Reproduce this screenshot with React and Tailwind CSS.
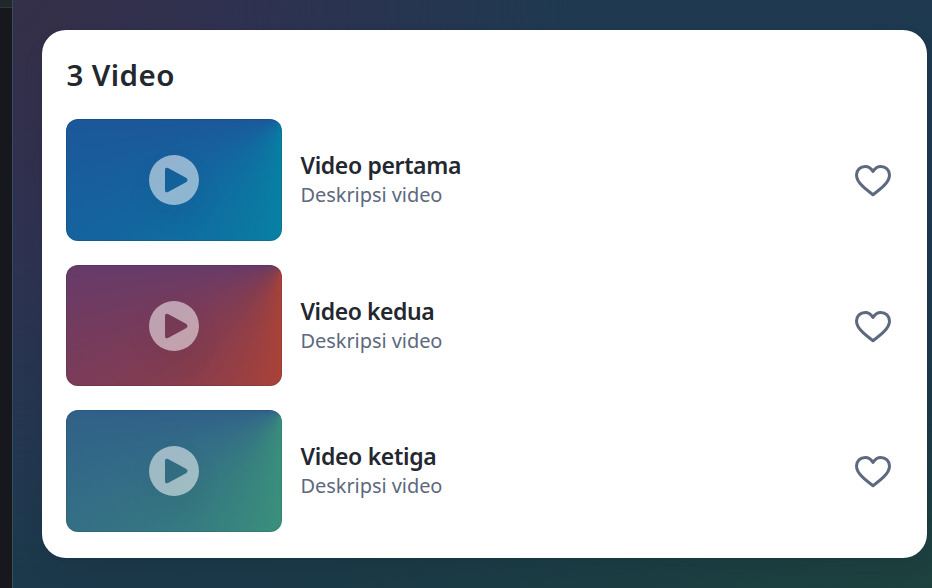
const videos = [
  {
    title: 'Video pertama',
    tracking: 'tracking-[-0.36px]',
    gradient: 'bg-[conic-gradient(at_right_top,#0880a3_0deg,#0880a3_180deg,#106ca1_222deg,#175f9d_250deg,#1c5799_270deg,#0880a3_360deg)]',
  },
  {
    title: 'Video kedua',
    tracking: 'tracking-[-0.43px]',
    gradient: 'bg-[conic-gradient(at_right_top,#a94238_0deg,#a94238_180deg,#863d4e_222deg,#753b5d_250deg,#663b69_270deg,#a94238_360deg)]',
  },
  {
    title: 'Video ketiga',
    tracking: 'tracking-[-0.32px]',
    gradient: 'bg-[conic-gradient(at_right_top,#3a907c_0deg,#3a907c_180deg,#367c80_217deg,#336b87_250deg,#306088_270deg,#3a907c_360deg)]',
  },
];

function Thumbnail({ gradient }) {
  return (
    <div className={`flex h-[121.5px] w-[216px] shrink-0 items-center justify-center rounded-xl shadow-[inset_0_0_0_1px_rgba(0,0,0,0.09)] ${gradient}`}>
      <svg className="size-[50px] drop-shadow-[0_12px_12px_rgba(0,0,0,0.09)]" viewBox="0 0 50 50">
        <path
          fill="#fff"
          fillOpacity="0.53"
          fillRule="evenodd"
          d="M25 0A25 25 0 1 1 25 50A25 25 0 1 1 25 0ZM16 14.8V35.2C16 37.2 17.5 37.7 19 36.9L37 27.2C39 26 39 24 37 22.8L19 13.1C17.5 12.3 16 12.8 16 14.8Z"
        />
      </svg>
    </div>
  );
}

function Heart() {
  return (
    <svg className="h-[32px] w-[37px] overflow-visible" viewBox="0 0 37 32" fill="none" stroke="#5e687e" strokeWidth="3" strokeLinejoin="round">
      <path
        transform="translate(0.5 0.5)"
        d="M18.5 6.9C16.5 3.5 13.8 1.9 10.8 1.9C5.7 1.9 2 5.5 2 10.5C2 14.7 4.4 18 7.6 21.1C10.9 24.3 14.7 27.3 18.5 30.2C22.3 27.3 26.1 24.3 29.4 21.1C32.6 18 35 14.7 35 10.5C35 5.5 31.3 1.9 26.2 1.9C23.2 1.9 20.5 3.5 18.5 6.9Z"
      />
    </svg>
  );
}

function VideoRow({ title, tracking, gradient }) {
  return (
    <div className="flex items-center">
      <Thumbnail gradient={gradient} />
      <div className="ml-[18.5px] flex-1">
        <h3 className={`text-[23px] leading-[30px] font-semibold text-[#23272f] ${tracking}`}>{title}</h3>
        <p className="text-[20px] leading-[30px] tracking-[-0.06px] text-[#5e687e]">Deskripsi video</p>
      </div>
      <button className="mr-3" aria-label="Favorit">
        <Heart />
      </button>
    </div>
  );
}

export default function App() {
  return (
    <div className="flex h-[588px] w-[932px] overflow-hidden font-['Noto_Sans',sans-serif]">
      <div className="w-3 shrink-0 bg-[#16181d]">
        <div className="h-2 border-b border-[#30363a] bg-[#22272c]" />
      </div>
      <main className="flex-1 border-l border-white/10 bg-[radial-gradient(circle_at_0%_0%,#352f48_0%,#2f3150_20%,transparent_52%),linear-gradient(165deg,#1e3950_0%,#1d3950_55%,#1b3948_78%,#1d423e_100%)] pt-[30px] pr-[5px] pl-[29px]">
        <section className="h-[528px] rounded-3xl bg-white px-6 pt-6 shadow-[0_0_0_1px_rgba(0,0,0,0.05),0_12px_24px_rgba(0,0,0,0.06)]">
          <h2 className="mb-[23.25px] ml-[0.5px] h-[42px] text-[29.5px] leading-[42px] font-semibold tracking-[0.4px] text-[#23272f]">3 Video</h2>
          <div className="flex flex-col gap-6">
            {videos.map((video) => (
              <VideoRow key={video.title} {...video} />
            ))}
          </div>
        </section>
      </main>
    </div>
  );
}
